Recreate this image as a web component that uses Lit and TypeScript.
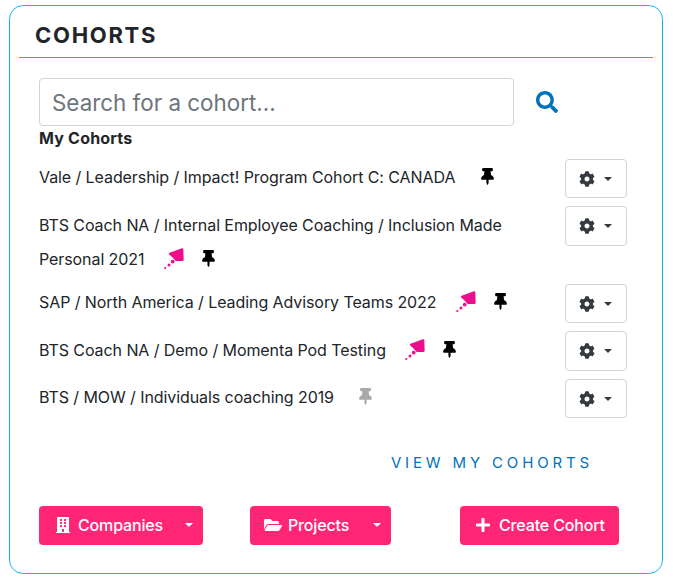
import {css, html, LitElement, svg} from "lit";
import {customElement} from "lit/decorators.js";

const PIN = "M298.028 214.267L285.793 96H328c13.255 0 24-10.745 24-24V24c0-13.255-10.745-24-24-24H56C42.745 0 32 10.745 32 24v48c0 13.255 10.745 24 24 24h42.207L85.972 214.267C37.465 236.82 0 277.261 0 328c0 13.255 10.745 24 24 24h136v104.007c0 1.242.289 2.467.845 3.578l24 48c2.941 5.882 11.364 5.893 14.311 0l24-48a8.008 8.008 0 0 0 .845-3.578V352h136c13.255 0 24-10.745 24-24-.001-51.183-37.983-91.42-85.973-113.733z";
const COG = "M487.4 315.7l-42.6-24.6c4.3-23.2 4.3-47 0-70.2l42.6-24.6c4.9-2.8 7.1-8.6 5.5-14-11.1-35.6-30-67.8-54.7-94.6-3.8-4.1-10-5.1-14.8-2.3L380.8 110c-17.9-15.4-38.5-27.3-60.8-35.1V25.8c0-5.6-3.9-10.5-9.4-11.7-36.7-8.2-74.3-7.8-109.2 0-5.5 1.2-9.4 6.1-9.4 11.7V75c-22.2 7.9-42.8 19.8-60.8 35.1L88.7 85.5c-4.9-2.8-11-1.9-14.8 2.3-24.7 26.7-43.6 58.9-54.7 94.6-1.7 5.4.6 11.2 5.5 14L67.3 221c-4.3 23.2-4.3 47 0 70.2l-42.6 24.6c-4.9 2.8-7.1 8.6-5.5 14 11.1 35.6 30 67.8 54.7 94.6 3.8 4.1 10 5.1 14.8 2.3l42.6-24.6c17.9 15.4 38.5 27.3 60.8 35.1v49.2c0 5.6 3.9 10.5 9.4 11.7 36.7 8.2 74.3 7.8 109.2 0 5.5-1.2 9.4-6.1 9.4-11.7v-49.2c22.2-7.9 42.8-19.8 60.8-35.1l42.6 24.6c4.9 2.8 11 1.9 14.8-2.3 24.7-26.7 43.6-58.9 54.7-94.6 1.5-5.5-.7-11.3-5.6-14.1zM256 336c-44.1 0-80-35.9-80-80s35.9-80 80-80 80 35.9 80 80-35.9 80-80 80z";
const SEARCH = "M505 442.7L405.3 343c-4.5-4.5-10.6-7-17-7H372c27.6-35.3 44-79.7 44-128C416 93.1 322.9 0 208 0S0 93.1 0 208s93.1 208 208 208c48.3 0 92.7-16.4 128-44v16.3c0 6.4 2.5 12.5 7 17l99.7 99.7c9.4 9.4 24.6 9.4 33.9 0l28.3-28.3c9.4-9.4 9.4-24.6.1-34zM208 336c-70.7 0-128-57.2-128-128 0-70.7 57.2-128 128-128 70.7 0 128 57.2 128 128 0 70.7-57.2 128-128 128z";
const BUILDING = "M436 480h-20V24c0-13.255-10.745-24-24-24H56C42.745 0 32 10.745 32 24v456H12c-6.627 0-12 5.373-12 12v20h448v-20c0-6.627-5.373-12-12-12zM128 76c0-6.627 5.373-12 12-12h40c6.627 0 12 5.373 12 12v40c0 6.627-5.373 12-12 12h-40c-6.627 0-12-5.373-12-12V76zm0 96c0-6.627 5.373-12 12-12h40c6.627 0 12 5.373 12 12v40c0 6.627-5.373 12-12 12h-40c-6.627 0-12-5.373-12-12v-40zm52 148h-40c-6.627 0-12-5.373-12-12v-40c0-6.627 5.373-12 12-12h40c6.627 0 12 5.373 12 12v40c0 6.627-5.373 12-12 12zm76 160h-64v-84c0-6.627 5.373-12 12-12h40c6.627 0 12 5.373 12 12v84zm64-172c0 6.627-5.373 12-12 12h-40c-6.627 0-12-5.373-12-12v-40c0-6.627 5.373-12 12-12h40c6.627 0 12 5.373 12 12v40zm0-96c0 6.627-5.373 12-12 12h-40c-6.627 0-12-5.373-12-12v-40c0-6.627 5.373-12 12-12h40c6.627 0 12 5.373 12 12v40zm0-96c0 6.627-5.373 12-12 12h-40c-6.627 0-12-5.373-12-12V76c0-6.627 5.373-12 12-12h40c6.627 0 12 5.373 12 12v40z";
const FOLDER = "M572.694 292.093L500.27 416.248A63.997 63.997 0 0 1 444.989 448H45.025c-18.523 0-30.064-20.093-20.731-36.093l72.424-124.155A64 64 0 0 1 152 256h399.964c18.523 0 30.064 20.093 20.73 36.093zM152 224h328v-48c0-26.51-21.49-48-48-48H272l-64-64H48C21.49 64 0 85.49 0 112v278.046l69.077-118.418C86.214 242.25 117.989 224 152 224z";
const PLUS = "M416 208H272V64c0-17.67-14.33-32-32-32h-32c-17.67 0-32 14.33-32 32v144H32c-17.67 0-32 14.33-32 32v32c0 17.67 14.33 32 32 32h144v144c0 17.67 14.33 32 32 32h32c17.67 0 32-14.33 32-32V304h144c17.67 0 32-14.33 32-32v-32c0-17.67-14.33-32-32-32z";

const icon = (d: string, w: number, cls: string) =>
  html`<svg class=${cls} viewBox="0 0 ${w} 512" fill="currentColor">${svg`<path d=${d}></path>`}</svg>`;

const pod = html`<svg class="pod" viewBox="0 0 22 24">
  <path fill="#ec0f8c" stroke="#ec0f8c" stroke-width="2.2" stroke-linejoin="round" d="M19.2 2.4 L7 6.8 L10.5 10 L13 12.8 L19.6 12.8 Z"></path>
  <circle fill="#ec0f8c" cx="9.7" cy="14.6" r="1.9"></circle>
  <circle fill="#ec0f8c" cx="6" cy="18" r="1.5"></circle>
  <circle fill="#ec0f8c" cx="2.3" cy="21" r="1.1"></circle>
</svg>`;

interface Cohort {
  name: string;
  pod: boolean;
  pinned: boolean;
}

const COHORTS: Cohort[] = [
  {name: "Vale / Leadership / Impact! Program Cohort C: CANADA", pod: false, pinned: true},
  {name: "BTS Coach NA / Internal Employee Coaching / Inclusion Made Personal 2021", pod: true, pinned: true},
  {name: "SAP / North America / Leading Advisory Teams 2022", pod: true, pinned: true},
  {name: "BTS Coach NA / Demo / Momenta Pod Testing", pod: true, pinned: true},
  {name: "BTS / MOW / Individuals coaching 2019", pod: false, pinned: false},
];

@customElement("app-root")
export class AppRoot extends LitElement {
  static styles = css`
    :host {
      display: block;
      width: 673px;
      height: 578px;
      box-sizing: border-box;
      padding: 5px 10px 0 9px;
      font-family: Inter, "Liberation Sans", sans-serif;
      color: #212529;
      background: #fff;
    }

    .card {
      box-sizing: border-box;
      height: 569px;
      border: 1px solid #20b5e6;
      border-radius: 14px;
      padding: 0 9px;
    }

    .title {
      margin: 0;
      padding: 15px 0 0 16px;
      height: 36px;
      font-size: 22px;
      line-height: 28px;
      font-weight: 700;
      letter-spacing: 1.7px;
      border-bottom: 1px solid #29abe2;
    }

    .body {
      padding: 20px 26px 0 20px;
    }

    .search {
      display: flex;
      align-items: center;
    }

    .field {
      box-sizing: border-box;
      width: 475px;
      height: 48px;
      padding: 1px 12px 0;
      border: 1px solid #ced4da;
      border-radius: 4px;
      font-size: 22.4px;
      line-height: 45px;
      color: #6c757d;
    }

    .search-icon {
      width: 22px;
      height: 22px;
      margin-left: 22px;
      color: #0071bc;
    }

    .heading {
      margin: 2px 0 10px;
      font-size: 16px;
      line-height: 21px;
      font-weight: 700;
      letter-spacing: 0.2px;
    }

    .row {
      display: flex;
      align-items: flex-start;
      justify-content: space-between;
      margin-bottom: 8px;
    }

    .name {
      width: 516px;
      padding-top: 1.1px;
      font-size: 16px;
      line-height: 34.25px;
      letter-spacing: -0.08px;
    }

    .pod {
      width: 22px;
      height: 24px;
      margin-left: 14px;
      vertical-align: -6px;
    }

    .pin {
      width: 13px;
      height: 17px;
      margin-left: 21px;
      vertical-align: -2px;
      color: #000;
    }

    .pod + .pin {
      margin-left: 17px;
    }

    .pin.off {
      color: #a9a9a9;
    }

    .gear {
      box-sizing: border-box;
      display: flex;
      align-items: center;
      flex: none;
      width: 62px;
      height: 39.45px;
      padding-left: 13px;
      border: 1px solid #ced4da;
      border-radius: 4px;
      color: #343a40;
    }

    .gear svg {
      width: 16px;
      height: 16px;
    }

    .caret {
      display: inline-block;
      width: 0;
      height: 0;
      border-top: 4.5px solid currentColor;
      border-left: 4.5px solid transparent;
      border-right: 4.5px solid transparent;
    }

    .gear .caret {
      margin-left: 9px;
    }

    .more {
      margin: 35.5px 34px 0 0;
      text-align: right;
      font-size: 15px;
      line-height: 18px;
      letter-spacing: 3.85px;
      color: #0071bc;
    }

    .actions {
      display: grid;
      grid-template-columns: 211px 210px 1fr;
      margin-top: 34px;
    }

    .btn {
      box-sizing: border-box;
      display: flex;
      align-items: center;
      height: 39px;
      border-radius: 4px;
      background: #ff2676;
      color: #fff;
      font-size: 16px;
      font-weight: 500;
      letter-spacing: -0.15px;
    }

    .btn .caret {
      margin-left: auto;
    }

    .companies {
      width: 164px;
      padding: 0 10px 1px 17px;
    }

    .projects {
      width: 141px;
      padding: 0 10px 1px 14px;
    }

    .create {
      width: 159px;
      padding: 0 0 1px 16px;
    }

    .companies svg {
      width: 14px;
      height: 16px;
      margin-right: 8px;
    }

    .projects svg {
      width: 18px;
      height: 16px;
      margin-right: 6px;
    }

    .create svg {
      width: 14px;
      height: 16px;
      margin-right: 9px;
    }
  `;

  render() {
    return html`
      <div class="card">
        <h1 class="title">COHORTS</h1>
        <div class="body">
          <div class="search">
            <div class="field">Search for a cohort...</div>
            ${icon(SEARCH, 512, "search-icon")}
          </div>
          <div class="heading">My Cohorts</div>
          ${COHORTS.map(
            (c) => html`
              <div class="row">
                <div class="name">
                  ${c.name} ${c.pod ? pod : ""}${icon(PIN, 384, c.pinned ? "pin" : "pin off")}
                </div>
                <div class="gear">${icon(COG, 512, "")}<span class="caret"></span></div>
              </div>
            `
          )}
          <div class="more">VIEW MY COHORTS</div>
          <div class="actions">
            <div class="btn companies">${icon(BUILDING, 448, "")}Companies<span class="caret"></span></div>
            <div class="btn projects">${icon(FOLDER, 576, "")}Projects<span class="caret"></span></div>
            <div class="btn create">${icon(PLUS, 448, "")}Create Cohort</div>
          </div>
        </div>
      </div>
    `;
  }
}
